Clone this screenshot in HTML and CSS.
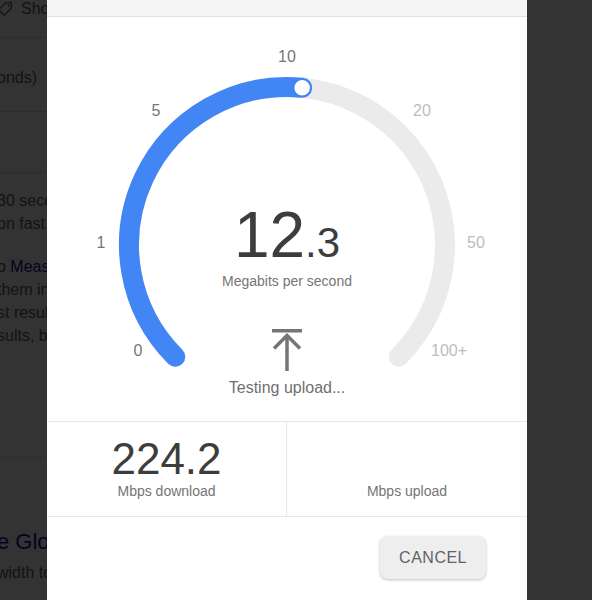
FILE: index.html
```html
<!DOCTYPE html>
<html lang="en">
<head>
  <meta charset="UTF-8">
  <meta name="viewport" content="width=device-width, initial-scale=1.0">
  <title>Internet speed test</title>
  <link rel="stylesheet" href="styles.css">
</head>
<body>
  <div class="page">
    <div class="tabs">
      <svg class="tag-icon" width="16" height="16" viewBox="0 0 24 24">
        <path d="M13 2.5h8.5V11L11 21.5 2.5 13z" fill="none" stroke="#5f6368" stroke-width="2" stroke-linejoin="round"/>
        <circle cx="17.5" cy="6.5" r="1.6" fill="#5f6368"/>
      </svg>
      <span>Shopping</span>
    </div>

    <div class="result-head">onds)</div>
    <div class="result-bar"></div>

    <div class="result-body">
      <p>30 seconds to complete. Results<br>on fast connections may vary.</p>
      <p>o <a href="#">Measurement Lab</a> (M-Lab)<br>them in the public domain<br>st results are published<br>sults, but no other personal</p>
    </div>

    <div class="result-next">
      <a class="next-title" href="#">e Global Speed Test</a>
      <p>width to check your connection</p>
    </div>
  </div>

  <div class="scrim"></div>

  <div class="dialog">
    <div class="dialog-top"></div>

    <div class="gauge">
      <svg class="dial" width="480" height="404" viewBox="0 0 480 404">
        <path d="M128.28 339.72 A158 158 0 1 1 351.72 339.72" fill="none" stroke="#ebebeb" stroke-width="20" stroke-linecap="round"/>
        <path d="M128.28 339.72 A158 158 0 0 1 255.16 70.73" fill="none" stroke="#4285f4" stroke-width="20" stroke-linecap="round"/>
        <circle cx="255.16" cy="70.73" r="8.5" fill="#fff" stroke="#4285f4" stroke-width="1.5"/>
      </svg>

      <span class="tick tick-0">0</span>
      <span class="tick tick-1">1</span>
      <span class="tick tick-5">5</span>
      <span class="tick tick-10">10</span>
      <span class="tick tick-20 dim">20</span>
      <span class="tick tick-50 dim">50</span>
      <span class="tick tick-100 dim">100+</span>

      <div class="readout">
        <div class="speed">12<small>.3</small></div>
        <div class="unit">Megabits per second</div>
        <svg class="upload-icon" width="30" height="42" viewBox="0 0 30 42">
          <path d="M0 1.75H30" stroke="#757575" stroke-width="3.5"/>
          <path d="M15 7V42" stroke="#757575" stroke-width="3.5"/>
          <path d="M2 19.5L15 6.5L28 19.5" fill="none" stroke="#757575" stroke-width="3.5"/>
        </svg>
        <div class="status">Testing upload...</div>
      </div>
    </div>

    <div class="stats">
      <div class="stat">
        <div class="stat-value">224.2</div>
        <div class="stat-label">Mbps download</div>
      </div>
      <div class="stat">
        <div class="stat-value"></div>
        <div class="stat-label">Mbps upload</div>
      </div>
    </div>

    <div class="actions">
      <button class="btn-cancel">Cancel</button>
    </div>
  </div>
</body>
</html>
```

FILE: styles.css
```css
* {
  margin: 0;
  padding: 0;
  box-sizing: border-box;
}

body {
  font-family: 'Liberation Sans', Arial, sans-serif;
  background: #fff;
  color: #5f6368;
  height: 600px;
  overflow: hidden;
}

/* page behind the dialog */

.page {
  margin-left: -3px;
  width: 520px;
  font-size: 16px;
}

.tabs {
  display: flex;
  align-items: flex-start;
  gap: 8px;
  height: 38px;
  border-bottom: 1px solid #dadce0;
  line-height: 18px;
  white-space: nowrap;
}

.tag-icon {
  margin-top: 1px;
  flex-shrink: 0;
}

.result-head {
  height: 74px;
  padding-top: 30px;
  line-height: 20px;
  border-bottom: 1px solid #dadce0;
}

.result-bar {
  height: 61px;
  border-bottom: 1px solid #dadce0;
}

.result-body {
  padding: 16px 0 110px;
  line-height: 23px;
  white-space: nowrap;
  border-bottom: 1px solid #dadce0;
}

.result-body p + p {
  margin-top: 20px;
}

.result-body a,
.next-title {
  color: #1a0dab;
  text-decoration: none;
}

.result-next {
  padding-top: 70px;
  white-space: nowrap;
}

.next-title {
  display: block;
  font-size: 22px;
  line-height: 28px;
}

.result-next p {
  margin-top: 5px;
  line-height: 23px;
}

.scrim {
  position: fixed;
  inset: 0;
  background: rgba(0, 0, 0, 0.8);
}

/* speed test dialog */

.dialog {
  position: fixed;
  top: 0;
  left: 47px;
  width: 480px;
  height: 620px;
  background: #fff;
}

.dialog-top {
  height: 17px;
  background: #f5f5f5;
  border-bottom: 1px solid #e0e0e0;
}

.gauge {
  position: relative;
  height: 404px;
  padding-top: 186px;
}

.dial {
  position: absolute;
  top: 0;
  left: 0;
}

.tick {
  position: absolute;
  transform: translate(-50%, -50%);
  font-size: 16px;
  line-height: 16px;
  color: #777;
}

.tick.dim { color: #bdbdbd; }

.tick-0 { left: 91px; top: 334px; }
.tick-1 { left: 54px; top: 226px; }
.tick-5 { left: 109px; top: 94px; }
.tick-10 { left: 240px; top: 40px; }
.tick-20 { left: 375px; top: 94px; }
.tick-50 { left: 429px; top: 226px; }
.tick-100 { left: 402px; top: 334px; }

.readout {
  position: relative;
  display: flex;
  flex-direction: column;
  align-items: center;
}

.speed {
  font-size: 64px;
  line-height: 64px;
  color: #3d3d3d;
}

.speed small {
  font-size: 42px;
  line-height: 1;
}

.unit {
  margin-top: 6px;
  font-size: 14px;
  line-height: 16px;
  color: #757575;
}

.upload-icon {
  display: block;
  margin-top: 40px;
}

.status {
  margin-top: 7px;
  font-size: 16px;
  line-height: 20px;
  color: #6f6f6f;
}

.stats {
  display: grid;
  grid-template-columns: 1fr 1fr;
  border-top: 1px solid #e8e8e8;
  border-bottom: 1px solid #e8e8e8;
}

.stat {
  padding: 13px 0 17px;
  text-align: center;
}

.stat:first-child {
  border-right: 1px solid #e8e8e8;
}

.stat-value {
  height: 48px;
  font-size: 44px;
  line-height: 48px;
  color: #3d3d3d;
}

.stat-label {
  font-size: 14px;
  line-height: 16px;
  color: #757575;
}

.actions {
  display: flex;
  justify-content: flex-end;
  padding: 19px 41px;
}

.btn-cancel {
  font-family: inherit;
  font-size: 16px;
  line-height: 19px;
  letter-spacing: 0.5px;
  text-transform: uppercase;
  color: #5f6368;
  background: #eee;
  border: none;
  border-radius: 8px;
  padding: 12px 19px;
  box-shadow: 0 1px 3px rgba(0, 0, 0, 0.25);
  cursor: pointer;
}
```
